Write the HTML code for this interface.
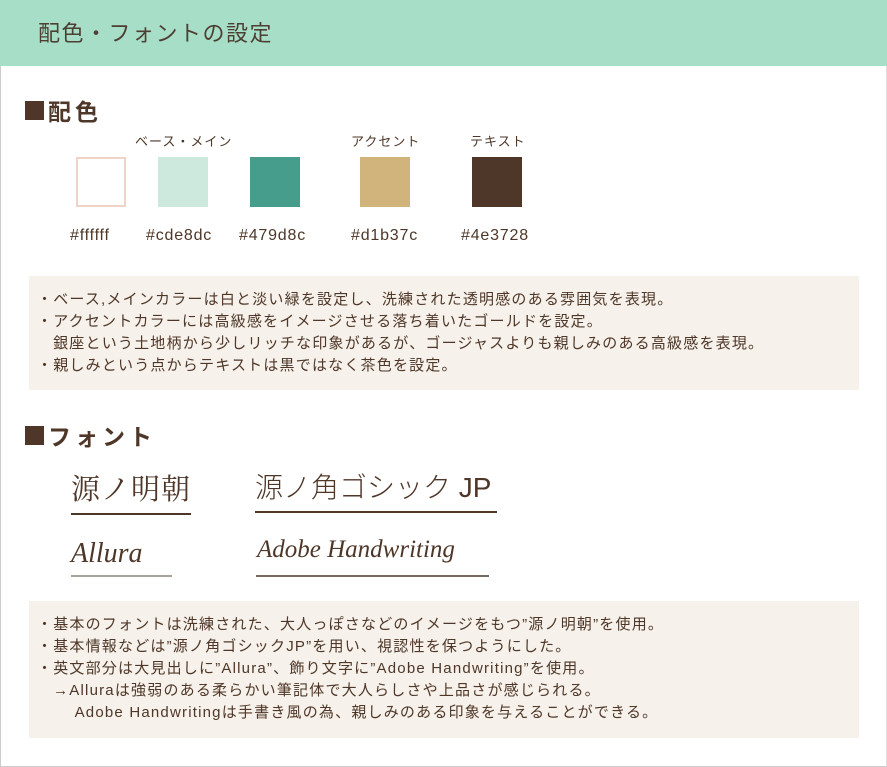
<!DOCTYPE html>
<html><head><meta charset="utf-8"><style>
*{margin:0;padding:0;box-sizing:border-box}
body{width:887px;height:767px;background:#fff;font-family:"Liberation Sans","Noto Sans CJK JP",sans-serif;color:#4e3728;position:relative;overflow:hidden}
.frame{position:absolute;left:0;top:0;width:887px;height:767px;border-left:1px solid #ccc;border-bottom:1px solid #ccc;border-right:1px solid #ddd}
.hdr{position:absolute;left:0;top:0;width:887px;height:66px;background:#a6dec8;font-size:22px;line-height:68px;padding-left:38px;color:#4e3f33;letter-spacing:1.5px}
.h2{position:absolute;left:25px;font-size:23px;font-weight:bold;letter-spacing:4px;display:flex;align-items:center}
.h2 i{display:inline-block;width:19px;height:19px;background:#4e3728;margin-right:4px}
.a{position:absolute;font-size:13px;white-space:nowrap;letter-spacing:1px}
.sw{position:absolute;top:157px;width:50px;height:50px}
.hex{position:absolute;top:227px;font-size:16px;white-space:nowrap;letter-spacing:.8px}
.box{position:absolute;left:29px;width:830px;background:#f6f1ea;font-size:15px;line-height:22px;padding-left:8px;white-space:nowrap;letter-spacing:1.2px}
.f{position:absolute;white-space:nowrap}
.ln{position:absolute;height:2px;background:#4e3728}
</style></head><body>
<div class="frame"></div>
<div class="hdr">配色・フォントの設定</div>
<div class="h2" style="top:93px"><i></i>配色</div>
<div class="a" style="left:135px;top:131px">ベース・メイン</div>
<div class="a" style="left:351px;top:131px">アクセント</div>
<div class="a" style="left:470px;top:131px">テキスト</div>
<div class="sw" style="left:76px;border:2px solid #efd3c7;background:#fff"></div>
<div class="sw" style="left:158px;background:#cde8dc"></div>
<div class="sw" style="left:250px;background:#479d8c"></div>
<div class="sw" style="left:360px;background:#d1b37c"></div>
<div class="sw" style="left:472px;background:#4e3728"></div>
<div class="hex" style="left:70px">#ffffff</div>
<div class="hex" style="left:146px">#cde8dc</div>
<div class="hex" style="left:239px">#479d8c</div>
<div class="hex" style="left:351px">#d1b37c</div>
<div class="hex" style="left:461px">#4e3728</div>
<div class="box" style="top:276px;height:114px;padding-top:13px">・ベース,メインカラーは白と淡い緑を設定し、洗練された透明感のある雰囲気を表現。<br>・アクセントカラーには高級感をイメージさせる落ち着いたゴールドを設定。<br>&nbsp;&nbsp;&nbsp;銀座という土地柄から少しリッチな印象があるが、ゴージャスよりも親しみのある高級感を表現。<br>・親しみという点からテキストは黒ではなく茶色を設定。</div>
<div class="h2" style="top:418px"><i></i>フォント</div>
<div class="f" style="left:71px;top:467px;font-size:29px;letter-spacing:1px;font-family:'Noto Serif CJK SC',serif">源ノ明朝</div>
<div class="ln" style="left:71px;top:513px;width:120px"></div>
<div class="f" style="left:255px;top:466px;font-size:28px;font-family:'Liberation Sans','Noto Sans CJK JP',sans-serif;font-weight:300">源ノ角ゴシック JP</div>
<div class="ln" style="left:255px;top:511px;width:242px;height:1.5px"></div>
<div class="f" style="left:71px;top:538px;font-size:28px;font-style:italic;font-family:'Liberation Serif',serif">Allura</div>
<div class="ln" style="left:71px;top:575px;width:101px;background:#aaa39b"></div>
<div class="f" style="left:257px;top:536px;font-size:25px;font-style:italic;font-family:'Liberation Serif',serif">Adobe Handwriting</div>
<div class="ln" style="left:256px;top:575px;width:233px;background:#7a6a5e"></div>
<div class="box" style="top:601px;height:137px;padding-top:13px">・基本のフォントは洗練された、大人っぽさなどのイメージをもつ”源ノ明朝”を使用。<br>・基本情報などは”源ノ角ゴシックJP”を用い、視認性を保つようにした。<br>・英文部分は大見出しに”Allura”、飾り文字に”Adobe Handwriting”を使用。<br>&nbsp;&nbsp;&nbsp;→Alluraは強弱のある柔らかい筆記体で大人らしさや上品さが感じられる。<br>&nbsp;&nbsp;&nbsp;&nbsp;&nbsp;&nbsp;&nbsp;Adobe Handwritingは手書き風の為、親しみのある印象を与えることができる。</div>
</body></html>
